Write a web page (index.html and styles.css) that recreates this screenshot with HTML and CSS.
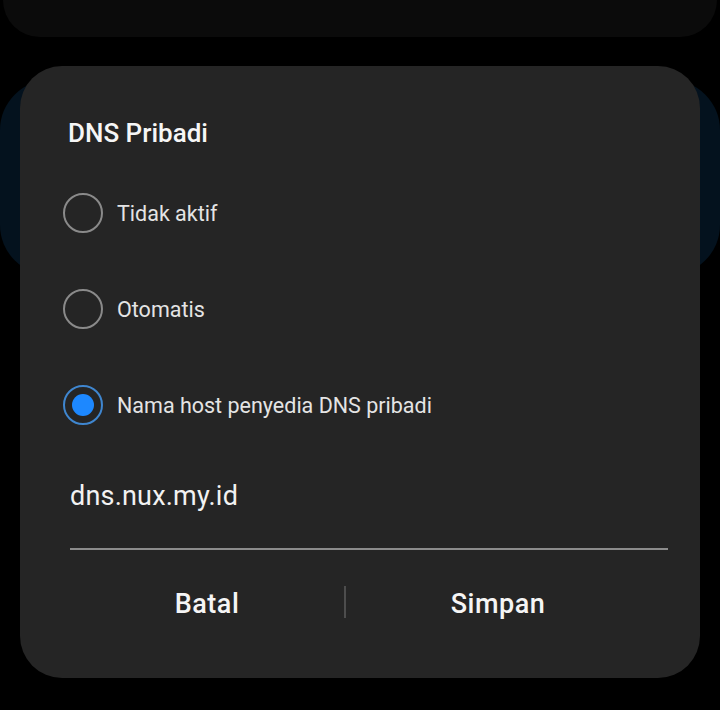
FILE: index.html
```html
<!DOCTYPE html>
<html lang="id">
<head>
<meta charset="utf-8">
<title>DNS Pribadi</title>
<link rel="stylesheet" href="styles.css">
</head>
<body>
<div class="screen">
  <div class="top-card"></div>
  <div class="blue-card"></div>

  <div class="dialog">
    <h1 class="title">DNS Pribadi</h1>
    <div class="options">
      <div class="option">
        <span class="radio"></span>
        <span class="label">Tidak aktif</span>
      </div>
      <div class="option">
        <span class="radio"></span>
        <span class="label">Otomatis</span>
      </div>
      <div class="option">
        <span class="radio checked"><span class="dot"></span></span>
        <span class="label">Nama host penyedia DNS pribadi</span>
      </div>
    </div>
    <div class="field">dns.nux.my.id</div>
    <div class="actions">
      <div class="btn btn-left">Batal</div>
      <div class="sep"></div>
      <div class="btn btn-right">Simpan</div>
    </div>
  </div>
</div>
</body>
</html>
```

FILE: styles.css
```css
* { box-sizing: border-box; }

html, body {
  margin: 0;
  padding: 0;
  background: #000;
}

body {
  font-family: Roboto, "Noto Sans", "Liberation Sans", sans-serif;
  width: 720px;
  height: 710px;
  overflow: hidden;
}

.screen {
  position: relative;
  width: 720px;
  height: 710px;
  display: flex;
  flex-direction: column;
  align-items: center;
}

.top-card {
  width: 714px;
  height: 37px;
  background: #0b0b0b;
  border-radius: 0 0 40px 40px;
}

.blue-card {
  margin-top: 43px;
  width: 720px;
  height: 195px;
  background: #04121e;
  border-radius: 50px;
}

.dialog {
  position: absolute;
  top: 66px;
  left: 20px;
  width: 680px;
  height: 612px;
  background: #252525;
  border-radius: 42px;
  padding: 52px 0 0 0;
  display: flex;
  flex-direction: column;
}

.title {
  margin: 0 0 17px 48px;
  font-size: 26px;
  line-height: 30px;
  font-weight: 500;
  color: #f6f6f6;
  letter-spacing: 0;
}

.options {
  display: flex;
  flex-direction: column;
}

.option {
  height: 96px;
  display: flex;
  align-items: center;
  padding-left: 43px;
}

.radio {
  width: 40px;
  height: 40px;
  border-radius: 50%;
  border: 2px solid #8a8a8a;
  display: flex;
  align-items: center;
  justify-content: center;
  flex: none;
}

.radio.checked {
  border: 2.5px solid #3f86cf;
}

.dot {
  width: 22px;
  height: 22px;
  border-radius: 50%;
  background: #1d88ff;
}

.label {
  margin-left: 14px;
  font-size: 21.5px;
  color: #e4e4e4;
  line-height: 26px;
  margin-top: 2px;
}

.field {
  margin: 25px 32px 0 50px;
  padding-bottom: 34px;
  border-bottom: 2px solid #8c8c8c;
  font-size: 27px;
  line-height: 36px;
  color: #f2f2f2;
  letter-spacing: 0.2px;
}

.actions {
  margin-top: 36px;
  margin-left: 50px;
  display: flex;
  align-items: flex-start;
}

.btn {
  height: 32px;
  padding-top: 2px;
  font-size: 27px;
  line-height: 32px;
  font-weight: 500;
  color: #f5f5f5;
  text-align: center;
  letter-spacing: 0.5px;
}

.btn-left { width: 274px; }
.btn-right { width: 304px; }

.sep {
  width: 2px;
  height: 32px;
  background: #4d4d4d;
}
```
